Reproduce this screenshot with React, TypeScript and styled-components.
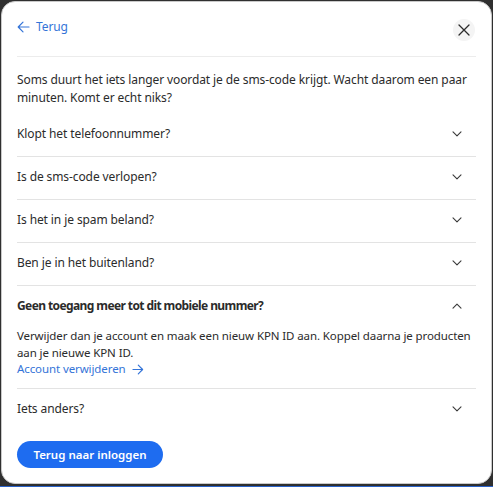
import React from "react";
import styled, { createGlobalStyle } from "styled-components";

const Global = createGlobalStyle`
  html, body { margin: 0; padding: 0; }
  body {
    background: #2f2f2f;
    font-family: "Noto Sans", "Open Sans", sans-serif;
    color: #2b2b2b;
    -webkit-font-smoothing: antialiased;
  }
`;

const Backdrop = styled.div`
  width: 493px;
  height: 487px;
  box-sizing: border-box;
  padding: 1px 1px 3px 1px;
  background: #2f2f2f;
  box-shadow: inset 0 -1px 0 #2a62c9;
`;

const Modal = styled.div`
  box-sizing: border-box;
  height: 483px;
  background: #fff;
  border: 1px solid #c9c9c9;
  border-radius: 14px;
  padding: 16px 15px 16px 15px;
  display: flex;
  flex-direction: column;
  letter-spacing: -0.1px;
`;

const Header = styled.div`
  display: flex;
  justify-content: space-between;
  align-items: flex-start;
  padding-bottom: 15px;
  border-bottom: 1px solid #ececec;
`;

const BackLink = styled.a`
  display: flex;
  align-items: center;
  gap: 6px;
  color: #3474d8;
  font-size: 12px;
  line-height: 18px;
  text-decoration: none;
  cursor: pointer;
`;

const CloseButton = styled.button`
  width: 22px;
  height: 22px;
  margin-top: 1px;
  margin-right: 1px;
  border: none;
  border-radius: 50%;
  background: #f4f4f4;
  display: flex;
  align-items: center;
  justify-content: center;
  padding: 0;
  cursor: pointer;
`;

const Intro = styled.p`
  margin: 14px 0 7px;
  font-size: 12px;
  line-height: 18px;
`;

const Row = styled.div<{ $last?: boolean }>`
  border-bottom: ${(p) => (p.$last ? "none" : "1px solid #e3e3e3")};
`;

const RowHead = styled.div<{ $open?: boolean }>`
  display: flex;
  justify-content: space-between;
  align-items: center;
  padding: 11px 14px 13px 0;
  font-size: 12px;
  line-height: 18px;
  font-weight: ${(p) => (p.$open ? 700 : 400)};
  letter-spacing: ${(p) => (p.$open ? "-0.6px" : "-0.1px")};
`;

const RowBody = styled.div`
  padding: 0 0 10px;
  font-size: 11.5px;
  line-height: 16.7px;
`;

const InlineLink = styled.a`
  display: inline-flex;
  align-items: center;
  gap: 6px;
  color: #3474d8;
  text-decoration: none;
`;

const Footer = styled.div`
  padding-top: 10px;
`;

const PrimaryButton = styled.button`
  width: 146px;
  height: 27px;
  border: none;
  border-radius: 14px;
  background: #1e6cf0;
  color: #fff;
  font-family: "Noto Sans", "Open Sans", sans-serif;
  font-size: 11.5px;
  font-weight: 600;
  cursor: pointer;
`;

const Chevron = ({ up }: { up?: boolean }) => (
  <svg width="10" height="6" viewBox="0 0 10 6" fill="none">
    <polyline
      points={up ? "1,5.2 5,1.2 9,5.2" : "1,0.8 5,4.8 9,0.8"}
      stroke="#3a3a3a"
      strokeWidth="1.1"
      strokeLinecap="round"
      strokeLinejoin="round"
    />
  </svg>
);

const ArrowLeft = () => (
  <svg width="13" height="12" viewBox="0 0 13 12" fill="none">
    <path d="M12 6H1.5M6 1.2L1.2 6L6 10.8" stroke="#3474d8" strokeWidth="1.2" strokeLinecap="round" strokeLinejoin="round" />
  </svg>
);

const ArrowRight = () => (
  <svg width="12" height="11" viewBox="0 0 12 11" fill="none">
    <path d="M1 5.5H10.5M6.3 1.2L10.6 5.5L6.3 9.8" stroke="#3474d8" strokeWidth="1.2" strokeLinecap="round" strokeLinejoin="round" />
  </svg>
);

const CloseIcon = () => (
  <svg width="12" height="12" viewBox="0 0 12 12" fill="none">
    <path d="M1 1L11 11M11 1L1 11" stroke="#2b2b2b" strokeWidth="1.3" strokeLinecap="round" />
  </svg>
);

const questions = [
  "Klopt het telefoonnummer?",
  "Is de sms-code verlopen?",
  "Is het in je spam beland?",
  "Ben je in het buitenland?",
];

export default function App() {
  return (
    <>
      <Global />
      <Backdrop>
        <Modal>
          <Header>
            <BackLink>
              <ArrowLeft />
              Terug
            </BackLink>
            <CloseButton aria-label="Sluiten">
              <CloseIcon />
            </CloseButton>
          </Header>
          <Intro>
            Soms duurt het iets langer voordat je de sms-code krijgt. Wacht daarom een paar
            minuten. Komt er echt niks?
          </Intro>
          {questions.map((q) => (
            <Row key={q}>
              <RowHead>
                {q}
                <Chevron />
              </RowHead>
            </Row>
          ))}
          <Row>
            <RowHead $open>
              Geen toegang meer tot dit mobiele nummer?
              <Chevron up />
            </RowHead>
            <RowBody>
              Verwijder dan je account en maak een nieuw KPN ID aan. Koppel daarna je producten
              aan je nieuwe KPN ID.
              <br />
              <InlineLink>
                Account verwijderen
                <ArrowRight />
              </InlineLink>
            </RowBody>
          </Row>
          <Row $last>
            <RowHead>
              Iets anders?
              <Chevron />
            </RowHead>
          </Row>
          <Footer>
            <PrimaryButton>Terug naar inloggen</PrimaryButton>
          </Footer>
        </Modal>
      </Backdrop>
    </>
  );
}
